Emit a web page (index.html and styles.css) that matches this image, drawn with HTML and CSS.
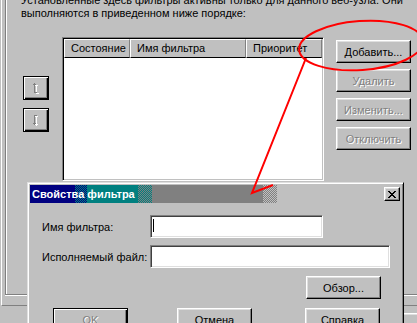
FILE: index.html
```html
<!DOCTYPE html>
<html lang="ru">
<head>
  <meta charset="UTF-8" />
  <title>Фильтры ISAPI</title>
  <link rel="stylesheet" href="styles.css">
</head>
<body>
<div class="screen">
  <div class="sheet">
    <div class="group">
      <p class="intro">Установленные здесь фильтры активны только для данного веб-узла. Они<br>выполняются в приведенном ниже порядке:</p>
      <div class="filters">
        <div class="order">
          <div class="btn btn-default btn-icon">
            <svg width="6" height="11" viewBox="0 0 6 11" shape-rendering="crispEdges">
              <path fill="#fff" d="M2 1h1v1H2zM2 2h3v1H2zM3 3h1v7H3zM3 10h3v1H3z"/>
              <path fill="#808080" d="M1 0h1v1H1zM0 1h3v1H0zM1 2h1v7H1zM1 9h3v1H1z"/>
            </svg>
          </div>
          <div class="btn btn-default btn-icon">
            <svg width="6" height="11" viewBox="0 0 6 11" shape-rendering="crispEdges">
              <path fill="#fff" d="M2 1h3v1H2zM3 2h1v7H3zM2 9h3v1H2zM3 10h1v1H3z"/>
              <path fill="#808080" d="M1 0h3v1H1zM1 1h1v7H1zM0 8h3v1H0zM1 9h1v1H1z"/>
            </svg>
          </div>
        </div>
        <div class="list">
          <div class="list-head">
            <div class="col">Состояние</div>
            <div class="col">Имя фильтра</div>
            <div class="col">Приоритет</div>
          </div>
          <div class="list-body"></div>
        </div>
        <div class="actions">
          <div class="btn">Добавить...</div>
          <div class="btn is-disabled">Удалить</div>
          <div class="btn is-disabled">Изменить...</div>
          <div class="btn is-disabled">Отключить</div>
        </div>
      </div>
    </div>
  </div>
  <div class="footer">
    <div class="btn">Применить</div>
  </div>

  <div class="dialog">
    <div class="title">
      <span>Свойства фильтра</span>
      <div class="close">
        <svg width="8" height="7" viewBox="0 0 8 7" shape-rendering="crispEdges">
          <path fill="#000" d="M0 0h2v1H0zM6 0h2v1H6zM1 1h2v1H1zM5 1h2v1H5zM2 2h4v1H2zM3 3h2v1H3zM2 4h4v1H2zM1 5h2v1H1zM5 5h2v1H5zM0 6h2v1H0zM6 6h2v1H6z"/>
        </svg>
      </div>
    </div>
    <div class="dialog-body">
      <div class="field">
        <label>Имя фильтра:</label>
        <div class="input input-name"><span class="caret"></span></div>
      </div>
      <div class="field">
        <label>Исполняемый файл:</label>
        <div class="input input-file"></div>
      </div>
      <div class="browse">
        <div class="btn">Обзор...</div>
      </div>
      <div class="dialog-buttons">
        <div class="btn btn-default is-disabled">OK</div>
        <div class="btn">Отмена</div>
        <div class="btn">Справка</div>
      </div>
    </div>
  </div>

  <svg class="markup" viewBox="0 0 417 323">
    <ellipse cx="361" cy="45.5" rx="62" ry="24.5" transform="rotate(-4 361 45.5)" fill="none" stroke="#f00" stroke-width="2"/>
    <path d="M306 58L252 193L273 185" fill="none" stroke="#f00" stroke-width="2"/>
  </svg>
</div>
</body>
</html>
```
FILE: styles.css
```css
* {
  box-sizing: border-box;
}

body {
  margin: 0;
  background: #c0c0c0;
  font-family: "Liberation Sans", Arial, sans-serif;
  font-size: 11px;
  color: #000;
}

.screen {
  position: relative;
  width: 417px;
  height: 323px;
  overflow: hidden;
}

/* property page */
.sheet {
  height: 306px;
  margin-left: 1px;
  border-left: 1px solid #fff;
  border-bottom: 1px solid #808080;
}

.group {
  display: flow-root;
  width: 430px;
  height: 295px;
  margin-left: 3px;
  border-left: 1px solid #808080;
  border-bottom: 1px solid #808080;
  box-shadow: inset 1px 0 #fff, 0 1px #fff;
}

.intro {
  margin: -6px 0 0;
  padding-left: 15px;
  line-height: 13px;
  white-space: nowrap;
}

.filters {
  display: flex;
  align-items: flex-start;
  margin-top: 17px;
}

.order {
  display: flex;
  flex-direction: column;
  gap: 8px;
  margin-left: 17px;
  padding-top: 39px;
}

/* buttons */
.btn {
  display: flex;
  align-items: center;
  justify-content: center;
  width: 75px;
  height: 23px;
  background: #c0c0c0;
  border: 1px solid;
  border-color: #fff #000 #000 #fff;
  box-shadow: inset -1px -1px #808080, inset 1px 1px #dfdfdf;
  white-space: nowrap;
}

.btn-default {
  border-color: #000;
  box-shadow: inset 1px 1px #fff, inset -1px -1px #000, inset -2px -2px #808080;
}

.btn-icon {
  width: 26px;
  height: 24px;
}

.is-disabled {
  color: #808080;
  text-shadow: 1px 1px 0 #fff;
}

/* list view */
.list {
  display: flex;
  flex-direction: column;
  width: 262px;
  height: 144px;
  margin-left: 13px;
  padding: 1px;
  background: #fff;
  border: 1px solid;
  border-color: #808080 #fff #fff #808080;
  box-shadow: inset 1px 1px #000, inset -1px -1px #c0c0c0;
}

.list-head {
  display: grid;
  grid-template-columns: 66px 116px 1fr;
  height: 19px;
  background: #c0c0c0;
}

.col {
  padding-left: 6px;
  line-height: 16px;
  border: 1px solid;
  border-color: #fff #808080 #000 #fff;
  white-space: nowrap;
  overflow: hidden;
}

.list-body {
  flex: 1;
}

.actions {
  display: flex;
  flex-direction: column;
  gap: 6px;
  margin-left: 12px;
  padding-top: 3px;
}

.footer {
  display: flex;
  justify-content: flex-end;
  padding-top: 7px;
  margin-right: -8px;
}

/* dialog */
.dialog {
  position: absolute;
  left: 27px;
  top: 182px;
  width: 377px;
  height: 160px;
  padding: 2px;
  background: #c0c0c0;
  border: 1px solid;
  border-color: #dfdfdf #000 #000 #dfdfdf;
  box-shadow: inset 1px 1px #fff, inset -1px -1px #808080;
}

.title {
  display: flex;
  align-items: center;
  justify-content: space-between;
  height: 18px;
  padding: 0 1px 0 2px;
  color: #fff;
  font-weight: bold;
  background: #c0c0c0 url("data:image/svg+xml,%3Csvg xmlns='http://www.w3.org/2000/svg' width='371' height='18' shape-rendering='crispEdges'%3E%3Cdefs%3E%3Cpattern id='a' width='2' height='2' patternUnits='userSpaceOnUse'%3E%3Crect width='2' height='2' fill='%23008080'/%3E%3Crect width='1' height='1' fill='%23000080'/%3E%3Crect x='1' y='1' width='1' height='1' fill='%23000080'/%3E%3C/pattern%3E%3Cpattern id='b' width='2' height='2' patternUnits='userSpaceOnUse'%3E%3Crect width='2' height='2' fill='%23808080'/%3E%3Crect width='1' height='1' fill='%23008080'/%3E%3Crect x='1' y='1' width='1' height='1' fill='%23008080'/%3E%3C/pattern%3E%3Cpattern id='c' width='2' height='2' patternUnits='userSpaceOnUse'%3E%3Crect width='2' height='2' fill='%23c0c0c0'/%3E%3Crect width='1' height='1' fill='%23808080'/%3E%3Crect x='1' y='1' width='1' height='1' fill='%23808080'/%3E%3C/pattern%3E%3C/defs%3E%3Crect width='45' height='18' fill='%23000080'/%3E%3Crect x='45' width='12' height='18' fill='url(%23a)'/%3E%3Crect x='57' width='51' height='18' fill='%23008080'/%3E%3Crect x='108' width='14' height='18' fill='url(%23b)'/%3E%3Crect x='122' width='111' height='18' fill='%23808080'/%3E%3Crect x='233' width='14' height='18' fill='url(%23c)'/%3E%3C/svg%3E") no-repeat;
}

.close {
  display: flex;
  align-items: center;
  justify-content: center;
  width: 16px;
  height: 14px;
  background: #c0c0c0;
  border: 1px solid;
  border-color: #fff #000 #000 #fff;
  box-shadow: inset -1px -1px #808080, inset 1px 1px #dfdfdf;
}

.dialog-body {
  padding: 12px 0 0 12px;
}

.field {
  display: flex;
  align-items: center;
  height: 23px;
}

.field + .field {
  margin-top: 7px;
}

.field label {
  width: 108px;
}

.input {
  height: 23px;
  background: #fff;
  border: 1px solid;
  border-color: #808080 #fff #fff #808080;
  box-shadow: inset 1px 1px #404040, inset -1px -1px #dfdfdf;
}

.input-name {
  width: 173px;
}

.input-file {
  width: 240px;
}

.caret {
  display: block;
  width: 1px;
  height: 13px;
  margin: 3px 0 0 2px;
  background: #000;
}

.browse {
  display: flex;
  justify-content: flex-end;
  margin-top: 8px;
  padding-right: 20px;
}

.dialog-buttons {
  display: flex;
  margin-top: 9px;
  padding-left: 11px;
}

.dialog-buttons .btn + .btn {
  margin-left: 49px;
}

.dialog-buttons .btn:last-child {
  margin-left: 53px;
}

.markup {
  position: absolute;
  left: 0;
  top: 0;
  width: 417px;
  height: 323px;
  pointer-events: none;
}
```
